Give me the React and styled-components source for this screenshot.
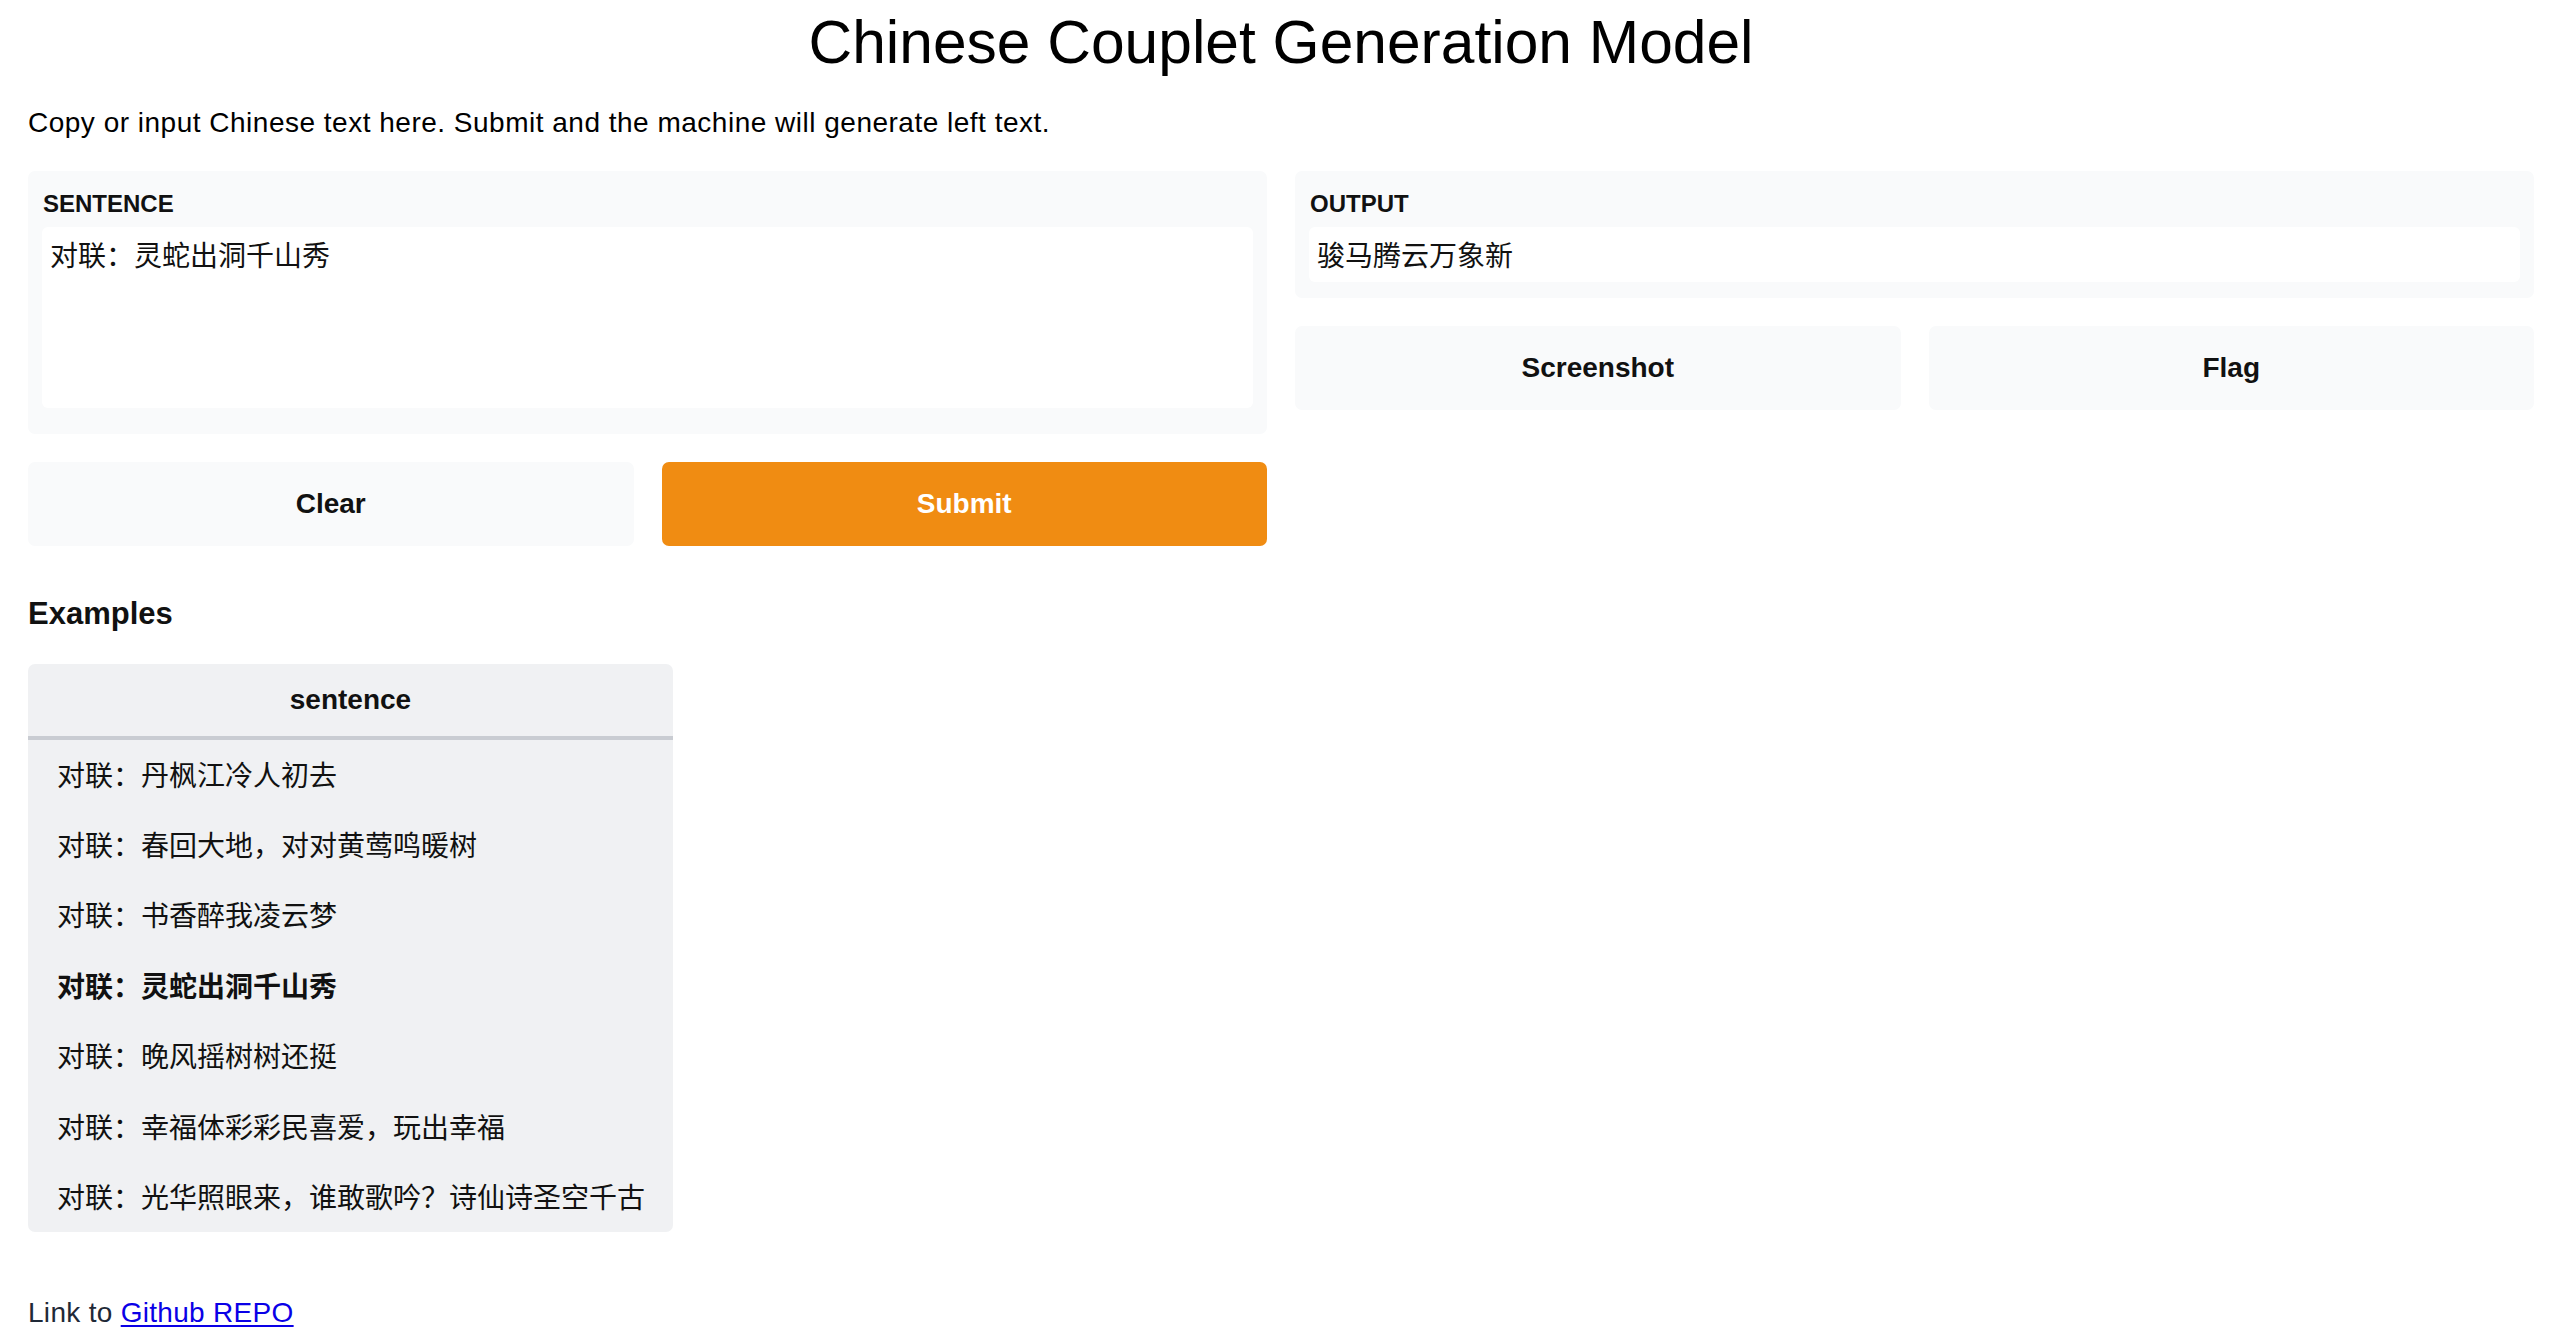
import React from 'react';
import styled, { createGlobalStyle } from 'styled-components';

const GlobalStyle = createGlobalStyle`
  html, body {
    margin: 0;
    padding: 0;
    background: #ffffff;
  }
  body {
    font-family: "Liberation Sans", "Noto Sans CJK SC", sans-serif;
    color: #111111;
  }
  * {
    box-sizing: border-box;
  }
`;

const Page = styled.div`
  padding: 5px 30px 0 28px;
`;

const Title = styled.h1`
  margin: 0;
  font-size: 60.5px;
  line-height: 74px;
  font-weight: 400;
  text-align: center;
  color: #000;
`;

const Description = styled.p`
  margin: 23px 0 0;
  font-size: 28px;
  line-height: 42px;
  letter-spacing: 0.5px;
  color: #000;
`;

const Columns = styled.div`
  display: grid;
  grid-template-columns: 1fr 1fr;
  gap: 28px;
  align-items: start;
  margin-top: 27px;
`;

const Column = styled.div`
  display: flex;
  flex-direction: column;
  gap: 28px;
`;

const Panel = styled.div`
  background: #f9fafb;
  border-radius: 7px;
  padding: ${(p) => p.$padding};
`;

const Label = styled.div`
  font-size: 24px;
  line-height: 30px;
  font-weight: 700;
  text-transform: uppercase;
  padding: 1px 0 0 1px;
  margin-bottom: 8px;
`;

const TextArea = styled.textarea`
  display: block;
  width: 100%;
  height: 181px;
  border: none;
  outline: none;
  resize: none;
  border-radius: 6px;
  background: #ffffff;
  padding: 9px 8px 4px;
  font-family: "Liberation Sans", "Noto Sans CJK SC", sans-serif;
  font-size: 28px;
  line-height: 42px;
  color: #111;
`;

const OutputBox = styled.div`
  background: #ffffff;
  border-radius: 6px;
  padding: 9px 8px 4px;
  font-size: 28px;
  line-height: 42px;
  min-height: 55px;
`;

const ButtonRow = styled.div`
  display: grid;
  grid-template-columns: 1fr 1fr;
  gap: 28px;
`;

const Button = styled.button`
  height: 84px;
  border: none;
  border-radius: 7px;
  background: ${(p) => (p.$primary ? '#f08c12' : '#f9fafb')};
  color: ${(p) => (p.$primary ? '#ffffff' : '#111111')};
  font-family: "Liberation Sans", sans-serif;
  font-size: 28px;
  font-weight: 700;
  cursor: pointer;
`;

const ExamplesHeading = styled.h2`
  margin: 45px 0 0;
  font-size: 31px;
  line-height: 46px;
  font-weight: 700;
`;

const ExampleTable = styled.table`
  margin-top: 27px;
  border-collapse: collapse;
  background: #f0f1f3;
  border-radius: 7px;
  overflow: hidden;
  font-size: 28px;
`;

const HeadCell = styled.th`
  height: 74px;
  padding: 0 28px;
  font-weight: 700;
  text-align: center;
  border-bottom: 4px solid #c9ccd2;
`;

const Cell = styled.td`
  height: 70.5px;
  padding: 0 28px 0 29px;
  white-space: nowrap;
  font-weight: ${(p) => (p.$active ? 700 : 400)};
`;

const Footer = styled.p`
  margin: 60px 0 0;
  font-size: 28px;
  line-height: 42px;
  letter-spacing: 0.3px;
  color: #1f2937;
`;

const RepoLink = styled.a`
  color: #0a00e6;
  text-decoration: underline;
  text-underline-offset: 3px;
`;

const examples = [
  '对联：丹枫江冷人初去',
  '对联：春回大地，对对黄莺鸣暖树',
  '对联：书香醉我凌云梦',
  '对联：灵蛇出洞千山秀',
  '对联：晚风摇树树还挺',
  '对联：幸福体彩彩民喜爱，玩出幸福',
  '对联：光华照眼来，谁敢歌吟？诗仙诗圣空千古',
];

const App = () => {
  return (
    <>
      <GlobalStyle />
      <Page>
        <Title>Chinese Couplet Generation Model</Title>
        <Description>
          Copy or input Chinese text here. Submit and the machine will generate left text.
        </Description>
        <Columns>
          <Column>
            <Panel $padding="17px 14px 26px">
              <Label>Sentence</Label>
              <TextArea defaultValue="对联：灵蛇出洞千山秀" />
            </Panel>
            <ButtonRow>
              <Button>Clear</Button>
              <Button $primary>Submit</Button>
            </ButtonRow>
          </Column>
          <Column>
            <Panel $padding="17px 14px 16px">
              <Label>Output</Label>
              <OutputBox>骏马腾云万象新</OutputBox>
            </Panel>
            <ButtonRow>
              <Button>Screenshot</Button>
              <Button>Flag</Button>
            </ButtonRow>
          </Column>
        </Columns>
        <ExamplesHeading>Examples</ExamplesHeading>
        <ExampleTable>
          <thead>
            <tr>
              <HeadCell>sentence</HeadCell>
            </tr>
          </thead>
          <tbody>
            {examples.map((text, index) => (
              <tr key={index}>
                <Cell $active={index === 3}>{text}</Cell>
              </tr>
            ))}
          </tbody>
        </ExampleTable>
        <Footer>
          Link to <RepoLink href="#">Github REPO</RepoLink>
        </Footer>
      </Page>
    </>
  );
};

export default App;
